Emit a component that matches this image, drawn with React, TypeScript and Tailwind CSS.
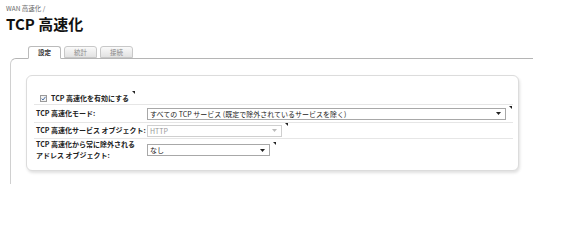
import React from "react";

const font = { fontFamily: '"Noto Sans CJK JP", "Liberation Sans", sans-serif' };

function Mark() {
  return (
    <svg width="3" height="3" viewBox="0 0 3 3" className="ml-[3px] self-start mt-[-2px]">
      <path d="M0 0 H3 V3 Z" fill="#222" />
    </svg>
  );
}

function FakeSelect({ text, width, disabled }: { text: string; width: string; disabled?: boolean }) {
  return (
    <div className="flex items-start">
      <div
        className={`${width} h-[12px] flex items-center justify-between border ${
          disabled ? "border-[#cfcfcf] text-[#999]" : "border-[#a8a8a8] text-[#222]"
        } bg-white pl-[2px] pr-[4px] text-[7px] leading-[10px] whitespace-nowrap`}
      >
        <span>{text}</span>
        <svg width="5" height="3" viewBox="0 0 5 3">
          <path d="M0 0 H5 L2.5 3 Z" fill={disabled ? "#bbb" : "#222"} />
        </svg>
      </div>
      <Mark />
    </div>
  );
}

export default function App() {
  return (
    <div className="w-[576px] h-[204px] bg-white overflow-hidden" style={font}>
      <div className="pt-[4px] pl-[6px] text-[6.5px] leading-[8px] text-[#666]">WAN 高速化 /</div>
      <div className="pl-[6px] mt-[3px] text-[15px] leading-[17px] font-bold text-[#111]">TCP 高速化</div>

      <div className="mt-[14px] pl-[28px] flex gap-[3px] relative z-10 -mb-px">
        <div className="w-[33px] h-[13px] border border-[#bbb] border-b-white rounded-t-[3px] bg-white text-[6.5px] leading-[11px] text-center text-[#333] font-bold">
          設定
        </div>
        <div className="w-[33px] h-[12px] border border-[#c8c8c8] rounded-t-[3px] bg-gradient-to-b from-[#fafafa] to-[#e2e2e2] text-[6.5px] leading-[11px] text-center text-[#888]">
          統計
        </div>
        <div className="w-[33px] h-[12px] border border-[#c8c8c8] rounded-t-[3px] bg-gradient-to-b from-[#fafafa] to-[#e2e2e2] text-[6.5px] leading-[11px] text-center text-[#888]">
          接続
        </div>
      </div>

      <div className="ml-[10px] w-[523px] h-[126px] border-t border-l border-t-[#b5b5b5] border-l-[#d0d0d0] rounded-tl-[6px] pt-[16px] pl-[15px]">
        <div className="w-[493px] h-[96px] border border-[#dcdcdc] rounded-[6px] shadow-[1px_2px_3px_rgba(0,0,0,0.12)] bg-white pt-[17px] pl-[7px] pr-[5px]">
          <div className="h-[12px] flex items-center border-b border-[#e6e6e6] pl-[6px] pb-[1px]">
            <div className="w-[7px] h-[7px] border border-[#9a9a9a] bg-[#f2f2f2] flex items-center justify-center">
              <svg width="5" height="5" viewBox="0 0 5 5">
                <path d="M0.6 2.6 L2 4 L4.5 0.8" stroke="#4a6fa5" strokeWidth="1" fill="none" />
              </svg>
            </div>
            <span className="ml-[4px] text-[7px] leading-[9px] font-bold text-[#222]">TCP 高速化を有効にする</span>
            <Mark />
          </div>

          <div className="h-[18px] flex items-center border-b border-[#e6e6e6]">
            <div className="w-[113px] pl-[2px] text-[7px] font-bold text-[#222] leading-[9px]">TCP 高速化モード:</div>
            <FakeSelect text="すべての TCP サービス (既定で除外されているサービスを除く)" width="w-[359px]" />
          </div>

          <div className="h-[16px] flex items-center border-b border-[#e6e6e6]">
            <div className="w-[113px] pl-[2px] text-[7px] font-bold text-[#222] leading-[9px] whitespace-nowrap">
              TCP 高速化サービス オブジェクト:
            </div>
            <FakeSelect text="HTTP" width="w-[135px]" disabled />
          </div>

          <div className="h-[22px] flex items-center">
            <div className="w-[113px] pl-[2px] text-[7px] font-bold text-[#222] leading-[11px]">
              TCP 高速化から常に除外される
              <br />
              アドレス オブジェクト:
            </div>
            <FakeSelect text="なし" width="w-[123px]" />
          </div>
        </div>
      </div>
    </div>
  );
}
